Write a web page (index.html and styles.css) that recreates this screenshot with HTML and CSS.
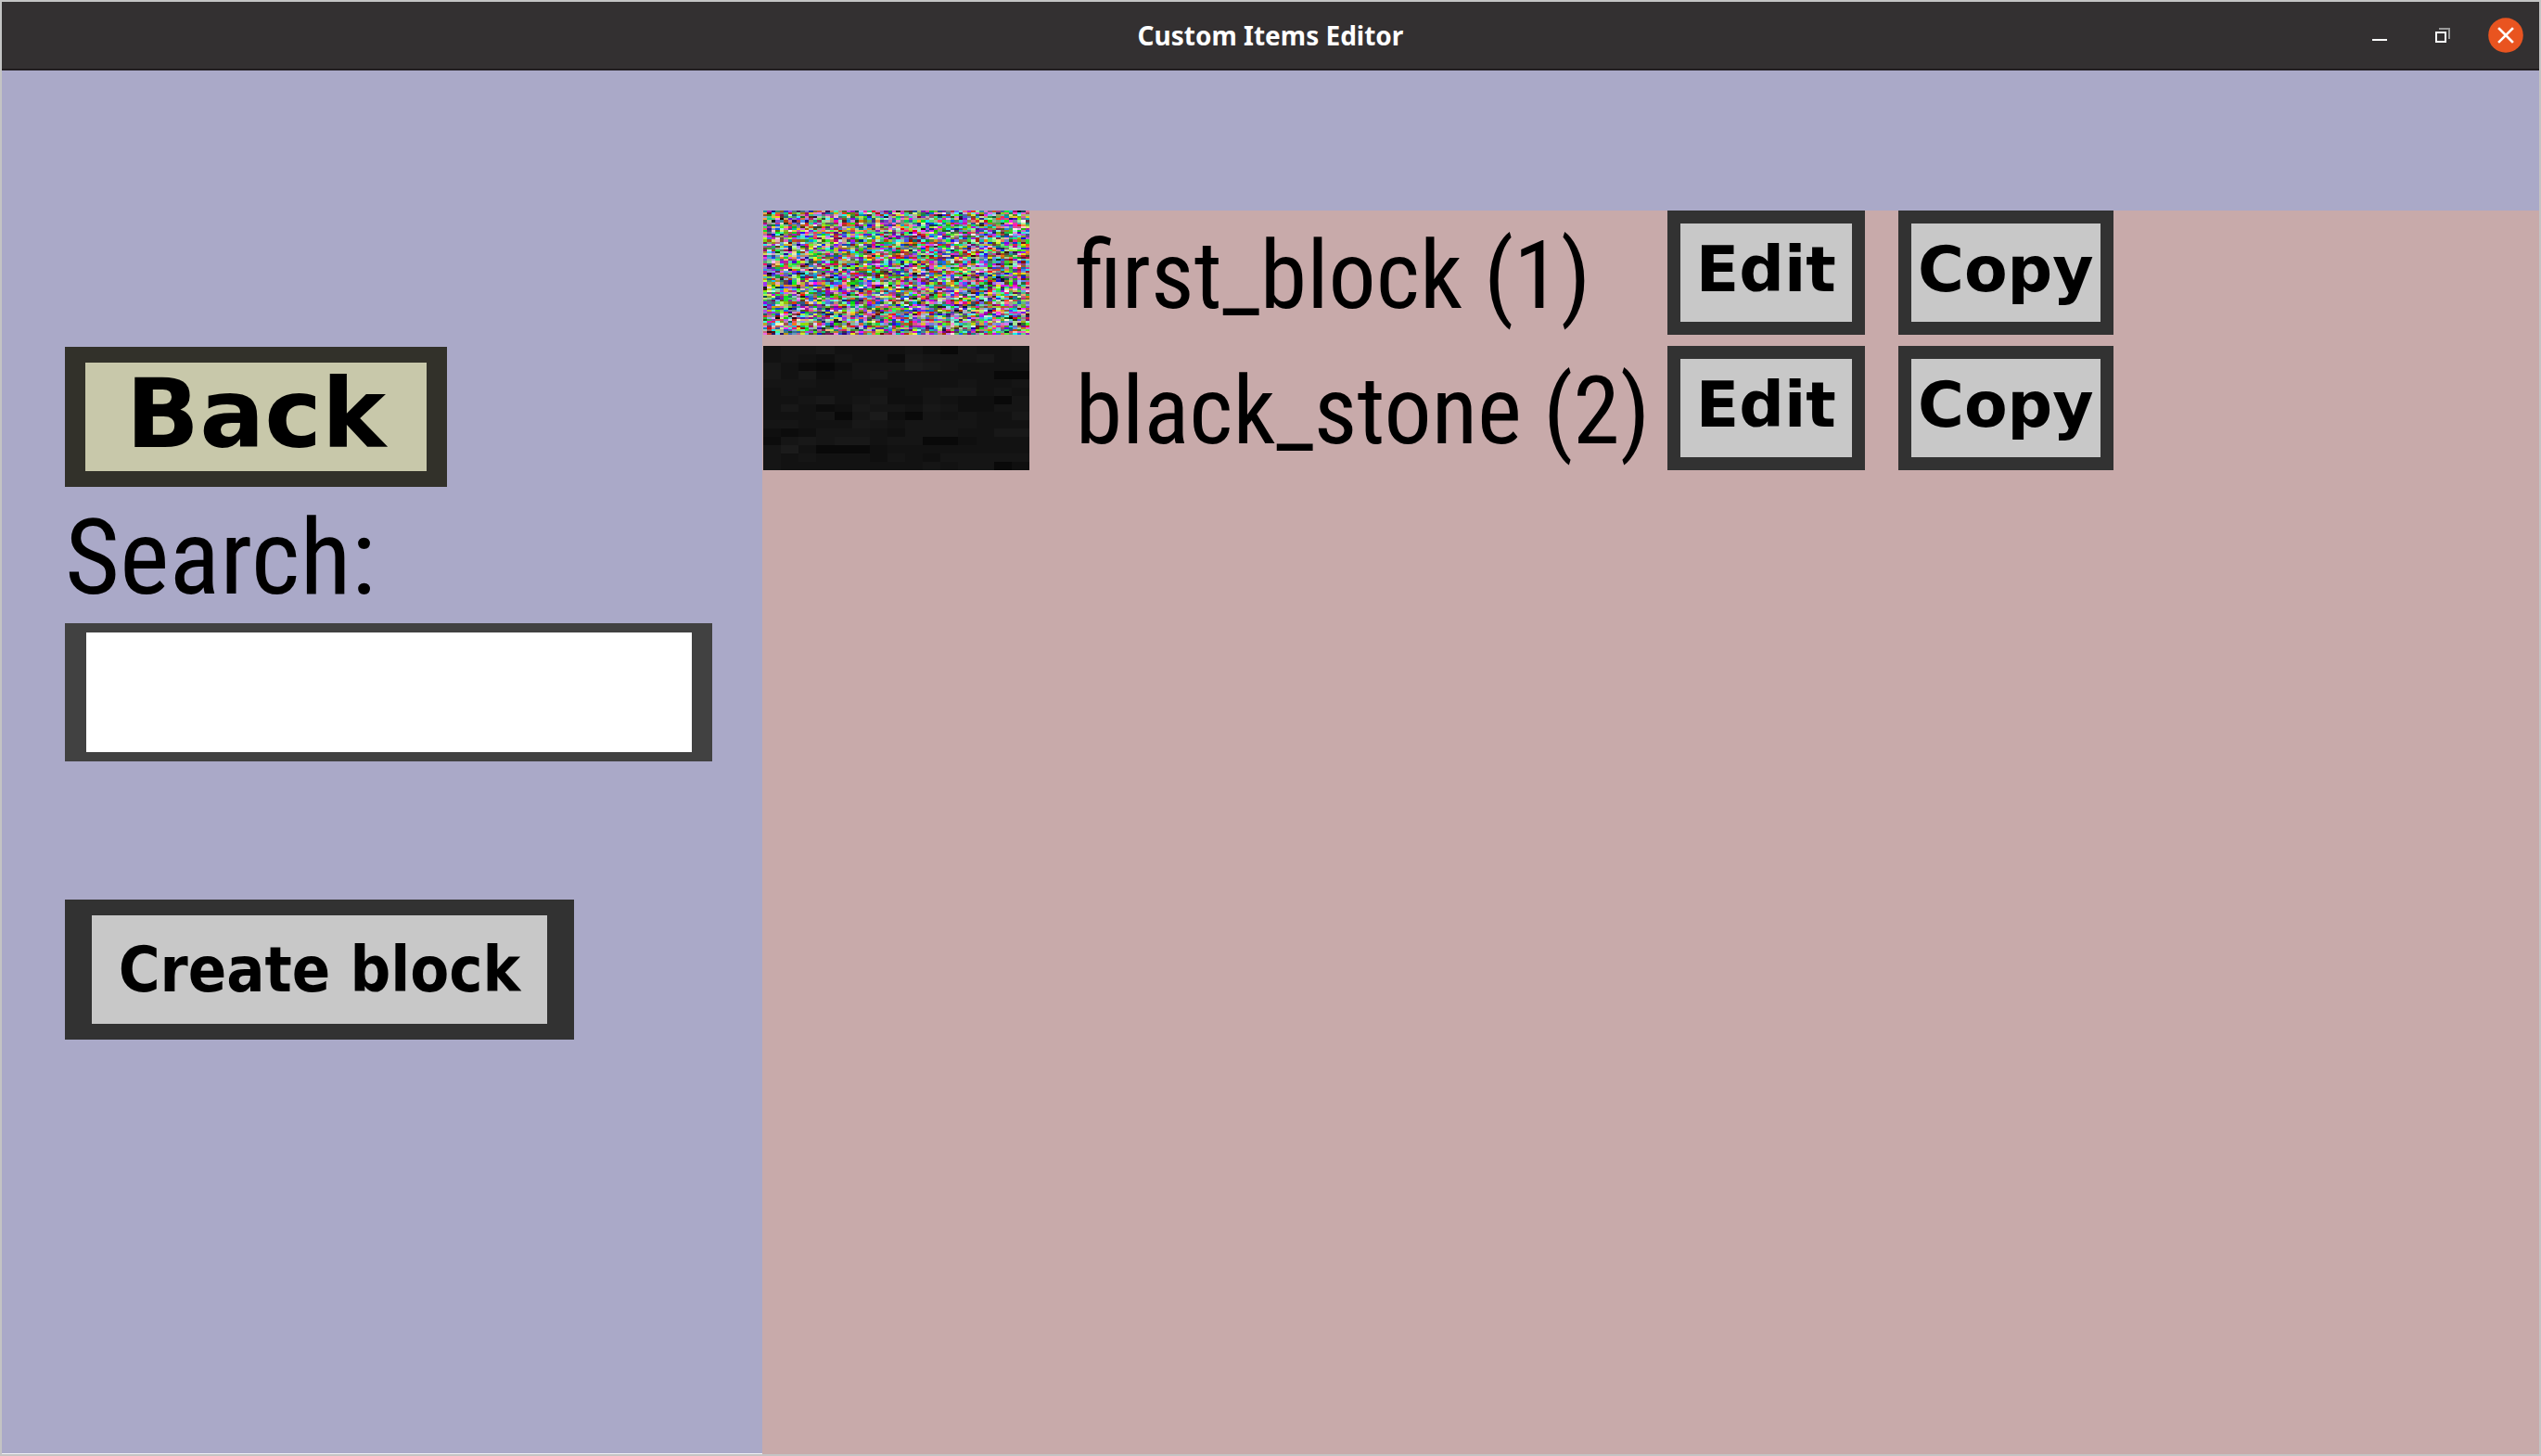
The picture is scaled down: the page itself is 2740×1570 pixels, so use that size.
FILE: index.html
```html
<!DOCTYPE html>
<html lang="en">
<head>
<meta charset="utf-8">
<title>Custom Items Editor</title>
<link rel="stylesheet" href="styles.css">
</head>
<body>
<div class="window">
  <header class="titlebar">
    <h1 class="title">Custom Items Editor</h1>
    <div class="window-controls">
      <button type="button" class="control" aria-label="Minimize">
        <svg width="38" height="38" viewBox="0 0 38 38"><path d="M11 23h16v2H11z" fill="#fff"/></svg>
      </button>
      <button type="button" class="control" aria-label="Restore">
        <svg width="38" height="38" viewBox="0 0 38 38"><path d="M15 11h12v12h-2V13H15z" fill="#999"/><path d="M12 16h10v10H12z" fill="none" stroke="#fff" stroke-width="2"/></svg>
      </button>
      <button type="button" class="control" aria-label="Close">
        <svg width="38" height="38" viewBox="0 0 38 38"><circle cx="19" cy="19" r="18.800" fill="#e95420"/><path d="M12 12l14 14M26 12L12 26" stroke="#fff" stroke-width="2.600" stroke-linecap="square"/></svg>
      </button>
    </div>
  </header>
  <main class="content">
    <section class="sidebar">
      <button type="button" class="button back">Back</button>
      <label class="search-label" for="search">Search:</label>
      <input class="search-input" id="search" type="text">
      <button type="button" class="button create">Create block</button>
    </section>
    <section class="blocks">
      <div class="block">
        <canvas class="thumb" id="first-block" width="64" height="64"></canvas>
        <span class="name">first_block (1)</span>
        <button type="button" class="button edit">Edit</button>
        <button type="button" class="button copy">Copy</button>
      </div>
      <div class="block">
        <canvas class="thumb" id="black-stone" width="15" height="15"></canvas>
        <span class="name">black_stone (2)</span>
        <button type="button" class="button edit">Edit</button>
        <button type="button" class="button copy">Copy</button>
      </div>
    </section>
  </main>
</div>
<script src="textures.js"></script>
</body>
</html>
```
FILE: styles.css
```css
* {
  box-sizing: border-box;
}

body {
  margin: 0;
  font-family: "DejaVu Sans", sans-serif;
  color: #000;
}

.window {
  min-height: 100vh;
  display: flex;
  flex-direction: column;
  border: 2px solid #c4c4c4;
  background: #aaa9c8;
}

.titlebar {
  display: grid;
  grid-template-columns: 1fr auto 1fr;
  align-items: center;
  height: 74px;
  background: #333031;
  border-bottom: 2px solid #211d20;
}

.title {
  grid-column: 2;
  margin: 0;
  font: bold 28px/40px "Noto Sans", sans-serif;
  color: #fff;
}

.window-controls {
  display: flex;
  justify-content: flex-end;
  gap: 30px;
  padding-right: 17px;
}

.control {
  width: 38px;
  height: 38px;
  padding: 0;
  border: 0;
  background: none;
}

.control svg {
  display: block;
}

.content {
  flex: 1;
  display: grid;
  grid-template-columns: calc(30% - 1px) 1fr;
}

.sidebar {
  display: flex;
  flex-direction: column;
  align-items: flex-start;
  padding: 298px 54px 0 68px;
  border-bottom: 1px solid #f0f0f4;
}

.button {
  padding: 0;
  border: 14px solid #323232;
  background: #c8c8c8;
  color: #000;
  font: bold 68px/80px "DejaVu Sans", sans-serif;
  white-space: nowrap;
}

.back {
  width: 412px;
  height: 151px;
  padding-bottom: 8px;
  border-width: 17px 22px;
  border-color: #32312a;
  background: #c8c8aa;
  font-size: 104px;
  line-height: 104px;
}

.search-label {
  height: 147px;
  padding-top: 12px;
  font: 114px/128px "Roboto Condensed", "DejaVu Sans Condensed", sans-serif;
}

.search-input {
  width: 100%;
  height: 149px;
  padding: 0 12px;
  border: solid #414141;
  border-width: 10px 22px 10px 23px;
  border-radius: 0;
  background: #fff;
  font: 114px/128px "Roboto Condensed", "DejaVu Sans Condensed", sans-serif;
}

.create {
  width: 549px;
  height: 151px;
  margin-top: 149px;
  border-width: 17px 29px;
  font-family: "DejaVu Sans Condensed", "DejaVu Sans", sans-serif;
}

.blocks {
  display: flex;
  flex-direction: column;
  gap: 12px;
  margin-top: 151px;
  background: #c8aaaa;
}

.block {
  display: flex;
  align-items: flex-start;
}

.thumb {
  width: 287px;
  height: 134px;
  margin-left: 1px;
  image-rendering: pixelated;
}

.name {
  width: 688px;
  padding: 6px 0 0 50px;
  font: 102px/128px "Roboto Condensed", "DejaVu Sans Condensed", sans-serif;
  white-space: nowrap;
}

.block .button {
  height: 134px;
  padding-bottom: 6px;
}

.edit {
  width: 213px;
}

.copy {
  width: 232px;
  margin-left: 36px;
}
```
FILE: textures.js
```js
// Block textures, drawn one pixel per texel and scaled up by the stylesheet.

// Colour noise from a small seeded generator, so that it is the same each time.
const noise = document.getElementById("first-block");
const noiseContext = noise.getContext("2d");
const image = noiseContext.createImageData(noise.width, noise.height);
let seed = 20201;
for (let i = 0; i < image.data.length; i++) {
  seed = (seed * 1664525 + 1013904223) >>> 0;
  image.data[i] = i % 4 === 3 ? 255 : seed >>> 24;
}
noiseContext.putImageData(image, 0, 0);

// Brightness of each texel of the stone, 0 (darkest) to 9 (lightest).
const stone = [
  "455644445315445", "454354426555645", "642135557654444", "646345644444411",
  "555444444445445", "454444534566454", "445645633543315", "464236554653355",
  "444515731545446", "554446545555444", "323555435554466", "256566455113444",
  "574111344444444", "545444354355555", "544444444545513"
];
const stoneContext = document.getElementById("black-stone").getContext("2d");
stone.forEach((row, y) => {
  [...row].forEach((level, x) => {
    const value = 6 + Number(level) * 3;
    stoneContext.fillStyle = `rgb(${value}, ${value}, ${value})`;
    stoneContext.fillRect(x, y, 1, 1);
  });
});
```
